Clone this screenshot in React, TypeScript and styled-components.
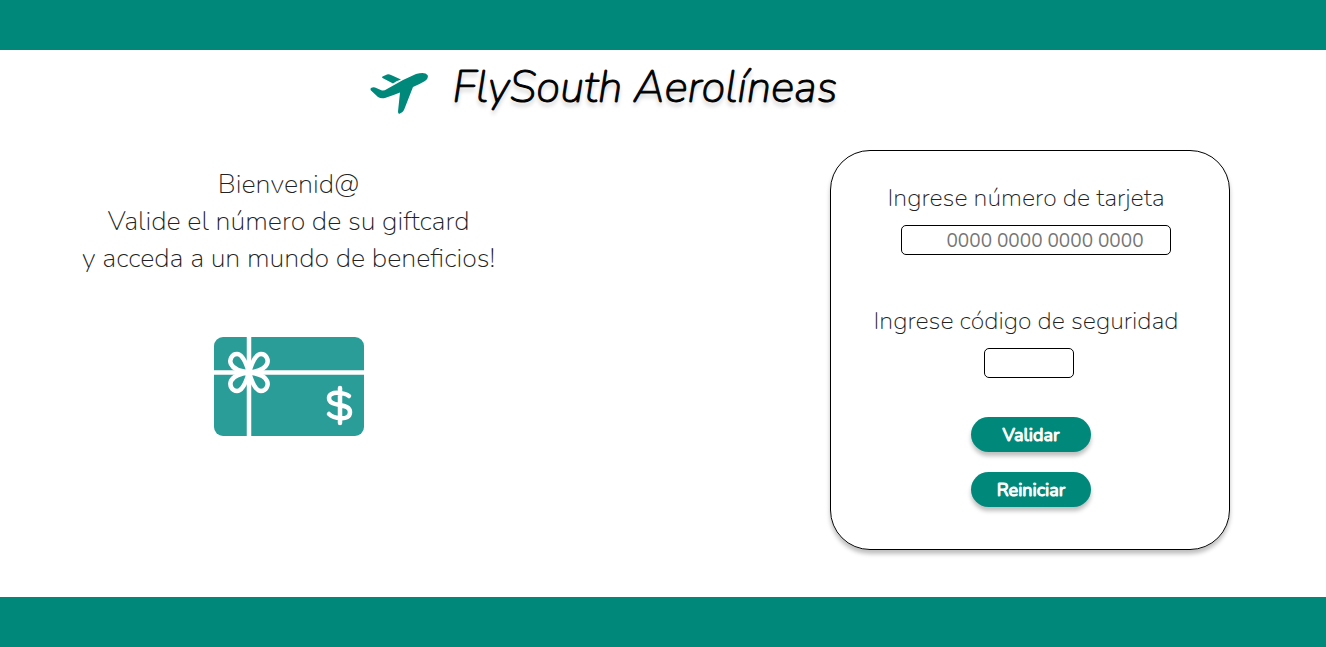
import React from "react";
import styled, { createGlobalStyle } from "styled-components";

const teal = "#00897b";

const GlobalStyle = createGlobalStyle`
  * { box-sizing: border-box; }
  body {
    margin: 0;
    background: #fff;
    color: #000;
    font-family: Nunito, Lato, "Open Sans", sans-serif;
    font-weight: 200;
  }
`;

const Page = styled.div`
  min-height: 100vh;
  display: flex;
  flex-direction: column;
`;

const Bar = styled.div`
  height: 50px;
  flex: none;
  background: ${teal};
`;

const Brand = styled.header`
  display: flex;
  justify-content: center;
  align-items: center;
  gap: 24px;
  height: 76px;
  padding-right: 118px;
`;

const Title = styled.h1`
  margin: 0;
  font-size: 44px;
  line-height: 60px;
  font-weight: 200;
  font-style: italic;
  -webkit-text-stroke: 1px currentColor;
  text-shadow: 0 4px 4px rgba(0, 0, 0, 0.25);
`;

const Main = styled.main`
  flex: 1;
  display: flex;
  justify-content: space-between;
  align-items: flex-start;
  flex-wrap: wrap;
  gap: 24px;
  padding: 24px 96px 40px 82px;
`;

const Intro = styled.section`
  display: flex;
  flex-direction: column;
  align-items: center;
  gap: 60px;
  padding-top: 16px;
`;

const Welcome = styled.p`
  margin: 0;
  color: #222;
  font-size: 27px;
  line-height: 37px;
  text-align: center;
`;

const Panel = styled.form`
  width: 400px;
  min-height: 400px;
  padding: 31px 24px;
  display: flex;
  flex-direction: column;
  align-items: center;
  border: 1px solid #000;
  border-radius: 40px;
  box-shadow: 0 4px 4px rgba(0, 0, 0, 0.25);
`;

const Field = styled.div<{ $shift: number }>`
  display: flex;
  flex-direction: column;
  align-items: center;
  height: 123px;

  input { margin-left: ${(p) => p.$shift}px; }
`;

const Label = styled.label`
  padding-right: 8px;
  color: #222;
  font-size: 25px;
  line-height: 32px;
  margin-bottom: 11px;
`;

const TextBox = styled.input<{ $width: number }>`
  width: ${(p) => p.$width}px;
  height: 30px;
  padding: 2px 0 0 18px;
  border: 1px solid #000;
  border-radius: 5px;
  background: #fff;
  font: inherit;
  font-size: 19px;
  font-weight: 400;
  text-align: center;

  &::placeholder { color: #757575; }
`;

const Actions = styled.div`
  display: flex;
  flex-direction: column;
  gap: 20px;
  margin: -11px 0 0 2px;
`;

const Button = styled.button`
  width: 120px;
  height: 35px;
  padding: 0;
  border: 0;
  border-radius: 20px;
  background: ${teal};
  color: #fff;
  box-shadow: 0 4px 4px rgba(0, 0, 0, 0.25);
  font: inherit;
  font-size: 18px;
  font-weight: 400;
  -webkit-text-stroke: 1px currentColor;
  cursor: pointer;
`;

const Plane = () => (
  <svg width="58" height="54" viewBox="0 -12 58 54" fill={teal} aria-hidden="true">
    <path d="M1 15Q3 14 5 14.500L12 17.500Q14 18 17 16L33 7L46 1Q55-1.500 57.500 2Q59 5 55 8Q50 11 43 14L34 37Q33 39 30 40.500Q28 41.500 28 38.500L30 19.500Q24 22 15 25Q11 26 8 24L1 17.500Q0 16 1 15Z" />
    <path d="M12.500 3.500L17 1.500Q19 1 21 2L31 6.500Q26 8 23 10.500L12.500 5Q11.500 4 12.500 3.500Z" />
  </svg>
);

const petal = "M0 0C-3-10-7-18.500-12-18.500C-17-18.500-20-13-18-8.500C-16-4-8-1 0 0Z";

const GiftCard = () => (
  <svg width="150" height="99" viewBox="0 0 150 99" aria-hidden="true">
    <rect width="150" height="99" rx="9" fill="#2a9d99" />
    <g fill="none" stroke="#fff" strokeWidth="4.500">
      <path d="M35 0V99M0 35.500H150" />
      <g transform="translate(35 35.500)" fill="#2a9d99" strokeLinejoin="round">
        <path d={petal} />
        <path d={petal} transform="scale(-1 1)" />
        <path d={petal} transform="scale(1 -1)" />
        <path d={petal} transform="scale(-1 -1)" />
      </g>
      <path d="M126 51V86M135 59C131 56 115 53 115 61C115 71 136 65 136 75C136 85 119 81 115 77" strokeLinecap="round" />
    </g>
  </svg>
);

export default function App() {
  return (
    <Page>
      <GlobalStyle />
      <Bar />
      <Brand>
        <Plane />
        <Title>FlySouth Aerolíneas</Title>
      </Brand>
      <Main>
        <Intro>
          <Welcome>
            Bienvenid@
            <br />
            Valide el número de su giftcard
            <br />y acceda a un mundo de beneficios!
          </Welcome>
          <GiftCard />
        </Intro>
        <Panel>
          <Field $shift={12}>
            <Label htmlFor="numero">Ingrese número de tarjeta</Label>
            <TextBox id="numero" $width={270} placeholder="0000 0000 0000 0000" />
          </Field>
          <Field $shift={-2}>
            <Label htmlFor="codigo">Ingrese código de seguridad</Label>
            <TextBox id="codigo" $width={90} />
          </Field>
          <Actions>
            <Button type="submit">Validar</Button>
            <Button type="reset">Reiniciar</Button>
          </Actions>
        </Panel>
      </Main>
      <Bar />
    </Page>
  );
}
